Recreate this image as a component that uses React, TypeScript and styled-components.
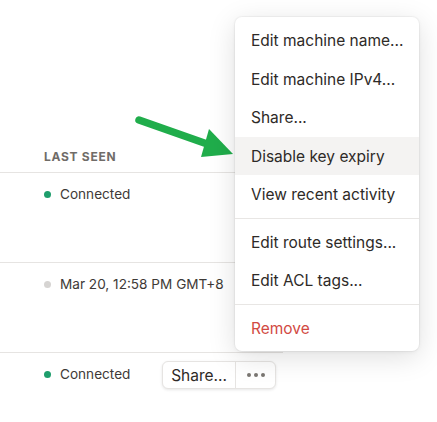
import React from "react";
import styled, { createGlobalStyle } from "styled-components";

const Global = createGlobalStyle`
  html, body { margin: 0; padding: 0; background: #fff; }
  body { font-family: Inter, "Noto Sans", sans-serif; color: #2e2a27; }
  * { box-sizing: border-box; }
`;

const Page = styled.div`
  position: relative;
  width: 437px;
  height: 422px;
  overflow: hidden;
  background: #fff;
`;

const Table = styled.div`
  width: 283px;
  padding-top: 149px;
`;

const HeaderRow = styled.div`
  display: flex;
  align-items: center;
  height: 24px;
  padding-left: 44px;
  border-bottom: 1px solid #e6e4e2;
`;

const HeaderCell = styled.div`
  font-size: 12px;
  font-weight: 700;
  letter-spacing: 0.06em;
  text-transform: uppercase;
  color: #706c68;
  line-height: 14px;
  margin-top: -8px;
`;

const Row = styled.div`
  display: flex;
  align-items: flex-start;
  justify-content: space-between;
  height: 90px;
  padding: 9px 7px 0 44px;
  border-bottom: 1px solid #e6e4e2;
`;

const Status = styled.div`
  display: flex;
  align-items: center;
  gap: 9px;
  font-size: 13.6px;
  line-height: 25px;
  height: 25px;
  color: #3e3a37;
  white-space: nowrap;
`;

const Dot = styled.span<{ $on: boolean }>`
  width: 7px;
  height: 7px;
  border-radius: 50%;
  background: ${(p) => (p.$on ? "#1e9e6c" : "#d6d4d2")};
  flex: none;
`;

const ButtonGroup = styled.div`
  display: flex;
  height: 28px;
  margin-top: -1px;
  border: 1px solid #e6e4e2;
  border-radius: 6px;
  background: #fff;
  box-shadow: 0 1px 3px rgba(0, 0, 0, 0.1);
  overflow: hidden;
`;

const GroupButton = styled.button<{ $icon?: boolean }>`
  border: none;
  background: transparent;
  font-family: Inter, "Noto Sans", sans-serif;
  font-size: 15.5px;
  color: #2e2a27;
  padding: 0 ${(p) => (p.$icon ? "0" : "8px")};
  width: ${(p) => (p.$icon ? "40px" : "auto")};
  display: flex;
  align-items: center;
  justify-content: center;
  & + & {
    border-left: 1px solid #e6e4e2;
  }
`;

const Dots = styled.span`
  display: flex;
  gap: 3px;
  span {
    width: 4px;
    height: 4px;
    border-radius: 50%;
    background: #7a7672;
  }
`;

const Menu = styled.div`
  position: absolute;
  left: 235px;
  top: 17px;
  width: 184px;
  padding: 4px 0;
  background: #fff;
  border-radius: 7px;
  box-shadow: 0 0 0 1px rgba(0, 0, 0, 0.03), 0 6px 28px rgba(0, 0, 0, 0.13),
    0 1px 4px rgba(0, 0, 0, 0.05);
`;

const Item = styled.div<{ $active?: boolean; $danger?: boolean }>`
  height: 38.5px;
  display: flex;
  align-items: center;
  padding: 1px 16px 0;
  font-size: 15.5px;
  white-space: nowrap;
  color: ${(p) => (p.$danger ? "#d24a43" : "#2e2a27")};
  background: ${(p) => (p.$active ? "#f4f3f2" : "transparent")};
`;

const Divider = styled.div`
  height: 1px;
  margin: 4px 0;
  background: #e8e6e4;
`;

const Arrow = styled.svg`
  position: absolute;
  left: 0;
  top: 0;
  pointer-events: none;
`;

export default function App() {
  return (
    <Page>
      <Global />
      <Table>
        <HeaderRow>
          <HeaderCell>Last seen</HeaderCell>
        </HeaderRow>
        <Row>
          <Status>
            <Dot $on />
            Connected
          </Status>
        </Row>
        <Row>
          <Status>
            <Dot $on={false} />
            Mar 20, 12:58 PM GMT+8
          </Status>
        </Row>
        <Row>
          <Status>
            <Dot $on />
            Connected
          </Status>
          <ButtonGroup>
            <GroupButton>Share...</GroupButton>
            <GroupButton $icon>
              <Dots>
                <span />
                <span />
                <span />
              </Dots>
            </GroupButton>
          </ButtonGroup>
        </Row>
      </Table>

      <Arrow width="437" height="422" viewBox="0 0 437 422">
        <line
          x1="139"
          y1="120"
          x2="210"
          y2="145"
          stroke="#20ad4b"
          strokeWidth="7.5"
          strokeLinecap="round"
        />
        <polygon points="209,129 233,154 201,157" fill="#20ad4b" />
      </Arrow>

      <Menu>
        <Item>Edit machine name...</Item>
        <Item>Edit machine IPv4...</Item>
        <Item>Share...</Item>
        <Item $active>Disable key expiry</Item>
        <Item>View recent activity</Item>
        <Divider />
        <Item>Edit route settings...</Item>
        <Item>Edit ACL tags...</Item>
        <Divider />
        <Item $danger>Remove</Item>
      </Menu>
    </Page>
  );
}
